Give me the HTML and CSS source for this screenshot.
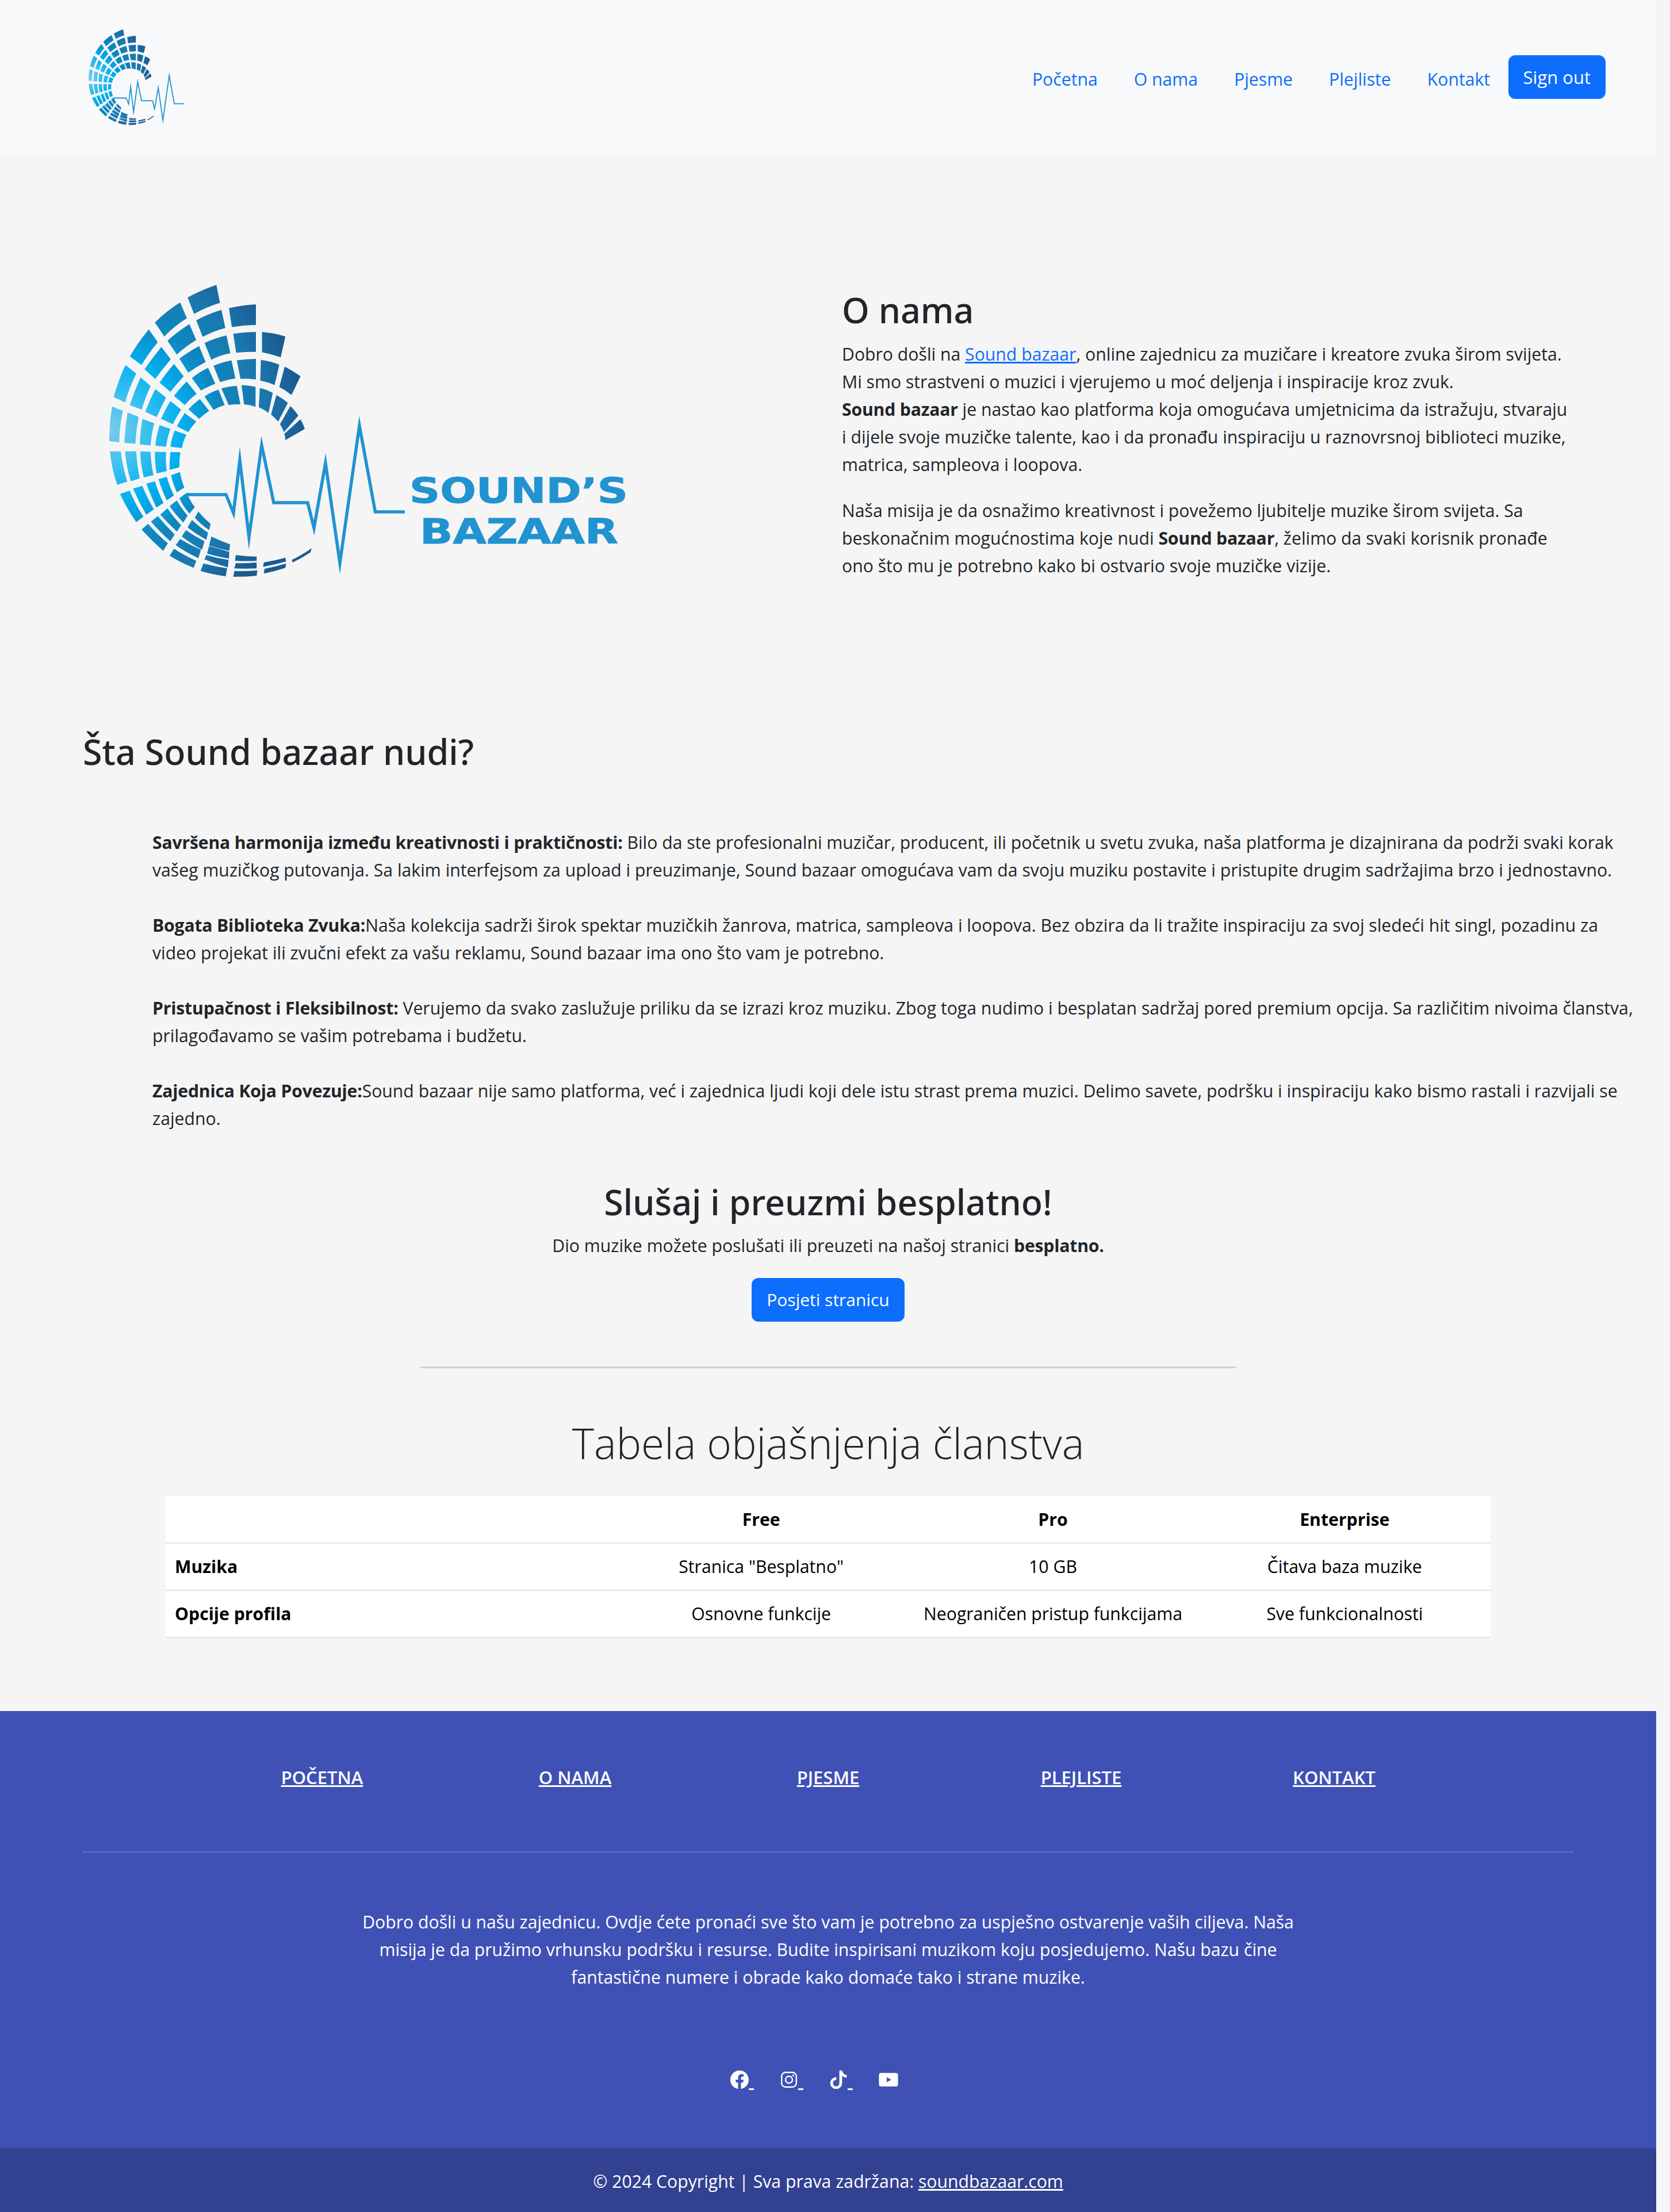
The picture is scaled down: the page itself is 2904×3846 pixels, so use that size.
FILE: index.html
```html
<!DOCTYPE html>
<html lang="bs">
<head>
  <meta charset="UTF-8">
  <title>Sound bazaar - O nama</title>
  <link rel="stylesheet" href="styles.css">
</head>
<body>

  <!-- shared logo mark, drawn over a 980x580 box -->
  <svg class="defs" width="0" height="0">
    <defs>
      <radialGradient id="markFill" gradientUnits="userSpaceOnUse" cx="0" cy="0" r="340" gradientTransform="translate(80 780) scale(1.6 2.703)">
        <stop offset="0" stop-color="#7accec"/>
        <stop offset="0.18" stop-color="#3fc1f0"/>
        <stop offset="0.38" stop-color="#02aeef"/>
        <stop offset="0.58" stop-color="#0e86bf"/>
        <stop offset="0.8" stop-color="#1a78ae"/>
        <stop offset="1" stop-color="#1b5a92"/>
      </radialGradient>
      <g id="mark">
        <g transform="scale(0.625 0.37)" fill="url(#markFill)">
          <path d="M298 155Q335 120 378 95L388 180Q350 200 316 232Z"/>
          <path d="M413 205Q450 190 488 187V284Q455 285 421 294Z"/>
          <path d="M207 272Q238 220 277 178L296 252Q260 290 233 338Z"/>
          <path d="M322 262Q355 232 392 213L403 298Q370 312 340 340Z"/>
          <path d="M425 325Q458 317 488 317V410Q460 410 433 414Z"/>
          <path d="M505 317Q540 322 570 338L557 436Q532 420 505 412Z"/>
          <path d="M137 432Q160 365 190 305L215 365Q190 415 170 472Z"/>
          <path d="M242 358Q270 315 303 280L322 355Q292 385 268 423Z"/>
          <path d="M345 368Q375 345 406 333L417 417Q390 425 364 447Z"/>
          <path d="M435 450Q462 443 488 443V540Q465 535 445 537Z"/>
          <path d="M502 448Q530 455 553 470L540 566Q522 552 500 545Z"/>
          <path d="M568 480Q592 500 612 525L587 613Q572 592 553 576Z"/>
          <path d="M92 622Q105 545 125 472L155 512Q135 580 124 648Z"/>
          <path d="M178 492Q200 438 225 387L251 445Q228 490 208 538Z"/>
          <path d="M275 442Q300 410 330 383L348 458Q322 480 300 508Z"/>
          <path d="M370 475Q395 458 420 450L431 535Q408 540 388 552Z"/>
          <path d="M448 567Q470 568 487 575V668Q472 660 455 657Z"/>
          <path d="M392 582Q412 572 435 570L445 657Q428 656 412 660Z"/>
          <path d="M137 660Q150 595 167 530L195 570Q180 625 170 682Z"/>
          <path d="M220 555Q238 510 260 467L287 525Q268 560 250 598Z"/>
          <path d="M310 533Q330 505 355 485L375 560Q352 575 335 592Z"/>
          <path d="M345 620Q362 600 384 588L401 660Q385 668 370 683Z"/>
          <path d="M499 580Q518 588 535 603L523 697Q512 682 496 670Z"/>
          <path d="M545 613Q563 630 577 650L550 738Q542 722 530 705Z"/>
          <path d="M180 692Q192 638 208 585L238 625Q225 668 212 716Z"/>
          <path d="M260 617Q276 582 295 549L323 607Q305 630 290 660Z"/>
          <path d="M300 680Q314 655 332 632L358 688Q342 705 330 725Z"/>
          <path d="M584 665Q597 686 606 710L566 787Q562 768 555 750Z"/>
          <path d="M612 727Q620 750 624 772L570 825Q570 810 567 795Z"/>
          <path d="M224 725Q235 682 250 641L280 682Q267 715 257 750Z"/>
          <path d="M268 760Q278 728 290 698L322 738Q310 760 300 787Z"/>
          <path d="M88 667L118 688Q108 760 108 835L80 830Q80 745 88 667Z"/>
          <path d="M131 695L162 716Q154 780 153 842L122 838Q124 765 131 695Z"/>
          <path d="M172 725L205 746Q197 798 195 850L165 845Q166 785 172 725Z"/>
          <path d="M220 755L250 772Q241 815 238 856L208 851Q211 803 220 755Z"/>
          <path d="M262 780L295 800Q285 830 282 862L250 856Q253 818 262 780Z"/>
          <path d="M82 878H112Q117 950 130 1020L102 1035Q86 955 82 878Z"/>
          <path d="M124 878H155Q157 942 165 1005L140 1018Q127 948 124 878Z"/>
          <path d="M166 878L195 880Q196 935 203 990L176 1000Q167 940 166 878Z"/>
          <path d="M207 880L238 881Q236 925 240 970L212 982Q206 930 207 880Z"/>
          <path d="M250 881L278 882Q274 918 275 953L248 965Q247 925 250 881Z"/>
          <path d="M110 1078L137 1062Q152 1125 175 1185L155 1210Q128 1145 110 1078Z"/>
          <path d="M146 1053L172 1040Q185 1095 204 1150L183 1176Q162 1115 146 1053Z"/>
          <path d="M183 1030L207 1018Q216 1070 231 1120L211 1142Q195 1085 183 1030Z"/>
          <path d="M217 1008L240 997Q247 1040 260 1085L240 1108Q226 1060 217 1008Z"/>
          <path d="M252 990L277 975Q280 1012 289 1048L268 1070Q257 1030 252 990Z"/>
          <path d="M170 1245L188 1218Q212 1265 243 1310L230 1345Q197 1295 170 1245Z"/>
          <path d="M196 1208L215 1182Q236 1226 262 1268L250 1300Q220 1255 196 1208Z"/>
          <path d="M222 1175L242 1145Q258 1186 280 1225L268 1255Q243 1215 222 1175Z"/>
          <path d="M248 1135L268 1108Q280 1144 298 1180L286 1212Q264 1175 248 1135Z"/>
          <path d="M275 1098L296 1072Q303 1106 318 1140L303 1170Q285 1135 275 1098Z"/>
          <path d="M248 1368L260 1335Q288 1366 322 1392L315 1425Q278 1400 248 1368Z"/>
          <path d="M265 1318L277 1290Q304 1317 335 1340L328 1380Q293 1352 265 1318Z"/>
          <path d="M282 1278L293 1248Q317 1276 345 1300L338 1340Q307 1312 282 1278Z"/>
          <path d="M298 1235L310 1200Q330 1232 355 1260L350 1293Q321 1266 298 1235Z"/>
          <path d="M318 1190L328 1160Q342 1190 362 1218L358 1248Q335 1222 318 1190Z"/>
          <path d="M334 1440L342 1405Q375 1420 408 1427L404 1465Q368 1457 334 1440Z"/>
          <path d="M345 1385L350 1365Q380 1380 412 1388L410 1423Q377 1408 345 1385Z"/>
          <path d="M358 1320L364 1278Q388 1298 416 1315L414 1345Q385 1335 358 1320Z"/>
          <path d="M358 1322L414 1350L413 1382Q380 1372 352 1358Z"/>
          <path d="M425 1467L428 1440Q460 1442 492 1437L490 1462Q458 1468 425 1467Z"/>
          <path d="M428 1428L432 1403Q460 1404 490 1400V1428Q458 1430 428 1428Z"/>
          <path d="M430 1392L432 1365Q460 1372 490 1372V1392Q460 1395 430 1392Z"/>
          <path d="M510 1452L512 1430Q543 1420 572 1405L570 1425Q540 1442 510 1452Z"/>
          <path d="M508 1420L510 1400Q540 1392 570 1378L572 1395Q540 1410 508 1420Z"/>
          <path d="M590 1400L588 1388Q618 1363 643 1333L640 1352Q617 1378 590 1400Z"/>
        </g>
        <polyline class="pulse" points="185,400 253,400 266,432 277,340 293,474 315,314 336,414 395,414 406,458 426,345 451,519 485,280 512.5,430 564,430"/>
      </g>
    </defs>
  </svg>

  <div class="page">

    <header class="topbar">
      <svg class="nav-logo" viewBox="50 35 515 510" preserveAspectRatio="none"><use href="#mark"/></svg>
      <nav class="nav-links">
        <a href="#">Početna</a>
        <a href="#">O nama</a>
        <a href="#">Pjesme</a>
        <a href="#">Plejliste</a>
        <a href="#">Kontakt</a>
      </nav>
      <a class="btn" href="#">Sign out</a>
    </header>

    <main>
      <section class="container about">
        <div class="about-logo">
          <svg class="hero-logo" viewBox="50 35 900 510">
            <use href="#mark"/>
            <text class="logo-text" x="572" y="414" textLength="380" lengthAdjust="spacingAndGlyphs">SOUND’S</text>
            <text class="logo-text" x="590" y="485" textLength="345" lengthAdjust="spacingAndGlyphs">BAZAAR</text>
          </svg>
        </div>
        <div class="about-text">
          <h2>O nama</h2>
          <p>Dobro došli na <a href="#">Sound bazaar</a>, online zajednicu za muzičare i kreatore zvuka širom svijeta. Mi smo strastveni o muzici i vjerujemo u moć deljenja i inspiracije kroz zvuk.<br>
          <b>Sound bazaar</b> je nastao kao platforma koja omogućava umjetnicima da istražuju, stvaraju i dijele svoje muzičke talente, kao i da pronađu inspiraciju u raznovrsnoj biblioteci muzike, matrica, sampleova i loopova.</p>
          <p>Naša misija je da osnažimo kreativnost i povežemo ljubitelje muzike širom svijeta. Sa beskonačnim mogućnostima koje nudi <b>Sound bazaar</b>, želimo da svaki korisnik pronađe ono što mu je potrebno kako bi ostvario svoje muzičke vizije.</p>
        </div>
      </section>

      <section class="container offer">
        <h2>Šta Sound bazaar nudi?</h2>
      </section>
      <p class="offer-list">
        <b>Savršena harmonija između kreativnosti i praktičnosti:</b> Bilo da ste profesionalni muzičar, producent, ili početnik u svetu zvuka, naša platforma je dizajnirana da podrži svaki korak vašeg muzičkog putovanja. Sa lakim interfejsom za upload i preuzimanje, Sound bazaar omogućava vam da svoju muziku postavite i pristupite drugim sadržajima brzo i jednostavno.<br><br>
        <b>Bogata Biblioteka Zvuka:</b>Naša kolekcija sadrži širok spektar muzičkih žanrova, matrica, sampleova i loopova. Bez obzira da li tražite inspiraciju za svoj sledeći hit singl, pozadinu za video projekat ili zvučni efekt za vašu reklamu, Sound bazaar ima ono što vam je potrebno.<br><br>
        <b>Pristupačnost i Fleksibilnost:</b> Verujemo da svako zaslužuje priliku da se izrazi kroz muziku. Zbog toga nudimo i besplatan sadržaj pored premium opcija. Sa različitim nivoima članstva, prilagođavamo se vašim potrebama i budžetu.<br><br>
        <b>Zajednica Koja Povezuje:</b>Sound bazaar nije samo platforma, već i zajednica ljudi koji dele istu strast prema muzici. Delimo savete, podršku i inspiraciju kako bismo rastali i razvijali se zajedno.
      </p>

      <section class="listen">
        <h2>Slušaj i preuzmi besplatno!</h2>
        <p>Dio muzike možete poslušati ili preuzeti na našoj stranici <b>besplatno.</b></p>
        <a class="btn" href="#">Posjeti stranicu</a>
        <hr>
        <h1>Tabela objašnjenja članstva</h1>
      </section>

      <table class="plans">
        <thead>
          <tr><th></th><th>Free</th><th>Pro</th><th>Enterprise</th></tr>
        </thead>
        <tbody>
          <tr><th>Muzika</th><td>Stranica "Besplatno"</td><td>10 GB</td><td>Čitava baza muzike</td></tr>
          <tr><th>Opcije profila</th><td>Osnovne funkcije</td><td>Neograničen pristup funkcijama</td><td>Sve funkcionalnosti</td></tr>
        </tbody>
      </table>
    </main>

    <footer class="footer">
      <div class="container">
        <nav class="footer-links">
          <a href="#">POČETNA</a>
          <a href="#">O NAMA</a>
          <a href="#">PJESME</a>
          <a href="#">PLEJLISTE</a>
          <a href="#">KONTAKT</a>
        </nav>
        <hr>
        <p class="footer-text">Dobro došli u našu zajednicu. Ovdje ćete pronaći sve što vam je potrebno za uspješno ostvarenje vaših ciljeva. Naša misija je da pružimo vrhunsku podršku i resurse. Budite inspirisani muzikom koju posjedujemo. Našu bazu čine fantastične numere i obrade kako domaće tako i strane muzike.</p>
        <div class="socials">
          <a href="#"><svg viewBox="0 0 16 16" fill="#fff"><path d="M16 8.049c0-4.446-3.582-8.05-8-8.05C3.58 0-.002 3.603-.002 8.05c0 4.017 2.926 7.347 6.75 7.951v-5.625h-2.03V8.05H6.75V6.275c0-2.017 1.195-3.131 3.022-3.131.876 0 1.791.157 1.791.157v1.98h-1.009c-.993 0-1.303.621-1.303 1.258v1.51h2.218l-.354 2.326H9.25V16c3.824-.604 6.75-3.934 6.75-7.951"/></svg> </a>
          <a href="#"><svg viewBox="0 0 32 32" fill="none" stroke="#fff" stroke-width="2.4"><rect x="3.2" y="3.2" width="25.6" height="25.6" rx="7"/><circle cx="16" cy="16" r="6"/><circle cx="23.4" cy="8.6" r="1.7" fill="#fff" stroke="none"/></svg> </a>
          <a href="#"><svg viewBox="0 0 16 16" fill="#fff" stroke="#fff" stroke-width=".4"><path d="M9 0h1.98c.144.715.54 1.617 1.235 2.512C12.895 3.389 13.797 4 15 4v2c-1.753 0-3.07-.814-4-1.829V11a5 5 0 1 1-5-5v2a3 3 0 1 0 3 3z"/></svg> </a>
          <a href="#"><svg viewBox="0 0 34 32" fill="#fff"><path fill-rule="evenodd" d="M4 4.3h26a3.6 3.6 0 0 1 3.6 3.6v16.2a3.6 3.6 0 0 1-3.6 3.6H4a3.6 3.6 0 0 1-3.6-3.6V7.900a3.6 3.6 0 0 1 3.6-3.6zM14 11.600v8.800l7.600-4.400z"/></svg></a>
        </div>
      </div>
      <div class="copyright">© 2024 Copyright | Sva prava zadržana: <a href="#">soundbazaar.com</a></div>
    </footer>

  </div>

</body>
</html>
```

FILE: styles.css
```css
* {
  box-sizing: border-box;
}

html, body {
  margin: 0;
  background: #f5f5f5;
}

body {
  font-family: "Open Sans", "Noto Sans", sans-serif;
  font-size: 30.2px;
  line-height: 48px;
  color: #212529;
}

.defs {
  position: absolute;
}

.pulse {
  fill: none;
  stroke: #2193d1;
  stroke-width: 5.5;
  stroke-miterlimit: 12;
}

.logo-text {
  font-family: "DejaVu Sans", sans-serif;
  font-weight: 700;
  font-size: 60px;
  fill: #2193d1;
  stroke: #2193d1;
  stroke-width: 1;
}

.page {
  width: 2880px;
}

.container {
  width: 2640px;
  margin: 0 auto;
  padding: 0 24px;
}

a {
  color: #0d6efd;
}

h1, h2 {
  margin: 0;
  font-weight: 500;
}

h2 {
  font-family: "Noto Sans", "Open Sans", sans-serif;
  font-size: 61px;
  line-height: 77px;
}

p {
  margin: 0;
}

hr {
  border: none;
}

b {
  font-weight: 700;
  letter-spacing: -0.2px;
}

.btn {
  display: inline-block;
  padding: 12px 24px;
  border: 2px solid #0d6efd;
  border-radius: 12px;
  background: #0d6efd;
  color: #fff;
  text-decoration: none;
}

/* top bar */
.topbar {
  display: flex;
  align-items: center;
  height: 268px;
  padding: 0 88px 0 154px;
  background: #f8f9fa;
}

.topbar .btn {
  font-size: 31px;
}

.nav-logo {
  width: 166px;
  height: 167px;
}

.nav-links {
  display: flex;
  margin-left: auto;
  padding-top: 8px;
}

.nav-links a {
  padding: 0 31.5px;
  text-decoration: none;
}

/* about */
.about {
  display: grid;
  grid-template-columns: 1296px 1296px;
  padding-top: 227px;
}

.about-logo {
  padding-left: 46px;
}

.hero-logo {
  display: block;
  width: 900px;
  height: 510px;
}

.about-text {
  padding: 5px 0 0 24px;
}

.about-text h2 {
  margin-bottom: 15px;
}

.about-text p + p {
  margin-top: 32px;
}

.offer {
  padding-top: 260px;
}

.offer-list {
  margin: 96px 0 0;
  padding: 0 30px 0 265px;
}

/* listen */
.listen {
  margin-top: 82px;
  text-align: center;
}

.listen p {
  margin-top: 14px;
}

.listen .btn {
  margin-top: 32px;
  font-size: 30px;
}

.listen hr {
  width: 1418px;
  margin: 78px auto 0;
  border-top: 3px solid #cfcfcf;
}

.listen h1 {
  margin-top: 82px;
  font-size: 73px;
  line-height: 96px;
  font-weight: 300;
}

/* plans table */
.plans {
  width: 2304px;
  margin: 44px auto 0;
  border-collapse: collapse;
  table-layout: fixed;
  background: #fff;
  color: #000;
}

.plans th, .plans td {
  height: 82px;
  padding: 16px;
  border-bottom: 2px solid #dee2e6;
  text-align: center;
  font-weight: 400;
}

.plans th {
  font-weight: 700;
}

.plans th:first-child {
  width: 782px;
  text-align: left;
}

/* footer */
.footer {
  margin-top: 127px;
  background: #3f51b5;
  color: #fff;
}

.footer a {
  color: #fff;
}

.footer-links {
  display: grid;
  grid-template-columns: repeat(5, 440px);
  justify-content: center;
  padding-top: 91px;
  text-align: center;
  font-weight: 600;
  font-size: 31px;
}

.footer .container hr {
  margin: 105px 0 0;
  border-top: 2px solid rgba(255, 255, 255, 0.2);
}

.footer-text {
  width: 1640px;
  margin: 97px auto 0;
  text-align: center;
}

.socials {
  display: flex;
  justify-content: center;
  gap: 45px;
  margin-top: 138px;
  padding: 0 48px 103px 0;
}

.socials a {
  display: block;
  height: 32px;
  line-height: 32px;
  font-size: 34px;
  white-space: pre;
}

.socials svg {
  width: 32px;
  height: 32px;
  vertical-align: top;
}

.socials a:last-child svg {
  width: 34px;
}

.copyright {
  height: 112px;
  padding-top: 34px;
  background: #324190;
  text-align: center;
}
```
